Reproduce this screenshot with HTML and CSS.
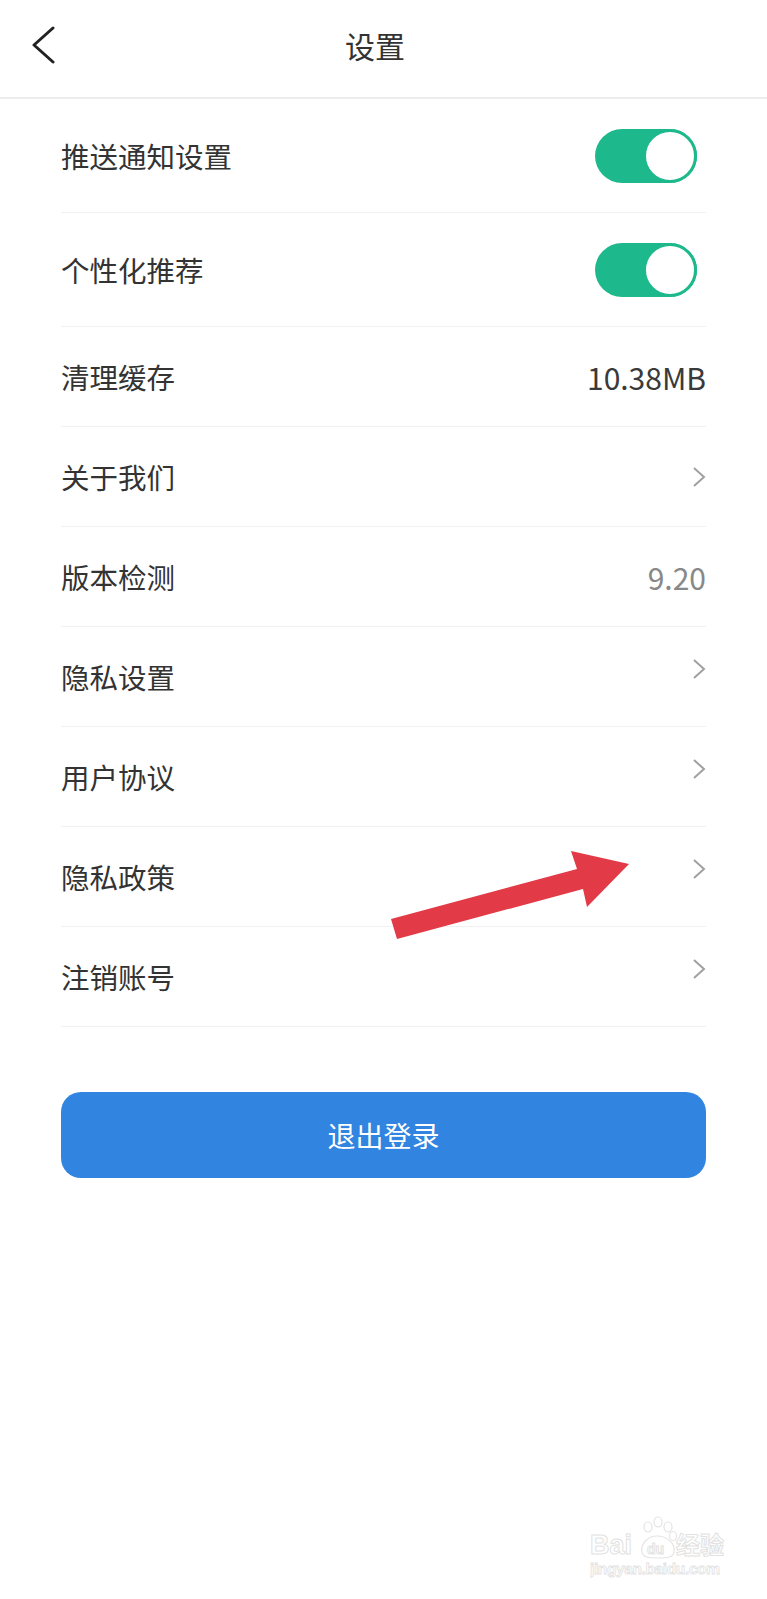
FILE: index.html
```html
<!DOCTYPE html>
<html lang="zh-CN">
<head>
    <meta charset="UTF-8">
    <title>设置</title>
    <link rel="stylesheet" href="styles.css">
</head>
<body>
<div class="page">
    <header class="nav">
        <a class="nav-back" href="javascript:;">
            <svg width="24" height="38" viewBox="0 0 24 38">
                <path d="M22 2 L3 19 L22 36" fill="none" stroke="#222" stroke-width="3" stroke-linecap="round" stroke-linejoin="round"/>
            </svg>
        </a>
        <h1 class="nav-title">设置</h1>
    </header>

    <ul class="setlist">
        <li class="setitem tall">
            <span class="setlabel">推送通知设置</span>
            <span class="switch on"></span>
        </li>
        <li class="setitem tall">
            <span class="setlabel">个性化推荐</span>
            <span class="switch on"></span>
        </li>
        <li class="setitem">
            <span class="setlabel">清理缓存</span>
            <span class="setvalue">10.38MB</span>
        </li>
        <li class="setitem">
            <span class="setlabel">关于我们</span>
            <svg class="arrow" width="14" height="22" viewBox="0 0 14 22"><path d="M2 2 L12 11 L2 20" fill="none" stroke="#a0a0a0" stroke-width="2"/></svg>
        </li>
        <li class="setitem">
            <span class="setlabel">版本检测</span>
            <span class="setvalue light">9.20</span>
        </li>
        <li class="setitem">
            <span class="setlabel">隐私设置</span>
            <svg class="arrow up" width="14" height="22" viewBox="0 0 14 22"><path d="M2 2 L12 11 L2 20" fill="none" stroke="#a0a0a0" stroke-width="2"/></svg>
        </li>
        <li class="setitem">
            <span class="setlabel">用户协议</span>
            <svg class="arrow up" width="14" height="22" viewBox="0 0 14 22"><path d="M2 2 L12 11 L2 20" fill="none" stroke="#a0a0a0" stroke-width="2"/></svg>
        </li>
        <li class="setitem">
            <span class="setlabel">隐私政策</span>
            <svg class="arrow up" width="14" height="22" viewBox="0 0 14 22"><path d="M2 2 L12 11 L2 20" fill="none" stroke="#a0a0a0" stroke-width="2"/></svg>
        </li>
        <li class="setitem">
            <span class="setlabel">注销账号</span>
            <svg class="arrow up" width="14" height="22" viewBox="0 0 14 22"><path d="M2 2 L12 11 L2 20" fill="none" stroke="#a0a0a0" stroke-width="2"/></svg>
        </li>
    </ul>

    <div class="logout-wrap">
        <a class="logout" href="javascript:;">退出登录</a>
    </div>

    <!-- red pointer drawn over the list -->
    <svg class="pointer" width="767" height="1599" viewBox="0 0 767 1599">
        <polygon points="391,919 577,869 571,851 629,864 587,907 583,889 397,939" fill="#e23a46"/>
    </svg>

    <svg class="watermark" width="140" height="66" viewBox="0 0 140 66">
        <g fill="#fff" stroke="#e4e4e4" stroke-width="1.2">
            <ellipse cx="58" cy="11" rx="4" ry="5"/>
            <ellipse cx="68" cy="6" rx="4" ry="5"/>
            <ellipse cx="78" cy="11" rx="4" ry="5"/>
            <ellipse cx="83" cy="20" rx="3.5" ry="4.5"/>
            <path d="M52 36 C50 26 60 20 67 20 C76 20 86 27 84 36 C83 42 76 42 68 42 C60 42 53 42 52 36 Z"/>
        </g>
        <g font-family="'Liberation Sans', 'Noto Sans CJK SC', sans-serif" fill="#fff" stroke="#e2e2e2" stroke-width="1">
            <text x="0" y="38" font-size="27" font-weight="bold">Bai</text>
            <text x="57" y="38" font-size="14" font-weight="bold">du</text>
            <text x="86" y="38" font-size="24" font-family="'Noto Sans CJK SC', sans-serif" font-weight="bold">经验</text>
        </g>
        <text x="0" y="58" font-size="15.5" font-family="'Liberation Sans', sans-serif" font-weight="bold" fill="#fff" stroke="#e2e2e2" stroke-width="0.8" textLength="130">jingyan.baidu.com</text>
    </svg>
</div>
</body>
</html>
```

FILE: styles.css
```css
body{
    margin:0;
    background:#fff;
    font-family:"Noto Sans CJK SC", "Noto Sans", sans-serif;
    color:#333;
}
.page{
    width:767px;
    min-height:1599px;
    position:relative;
    overflow:hidden;
}

.nav{
    height:99px;
    display:flex;
    align-items:center;
    padding:0 72px 8px 31px;
    box-sizing:border-box;
    border-bottom:2px solid #ececec;
}
.nav-back{
    width:24px;
    height:38px;
    display:block;
}
.nav-back svg{
    display:block;
}
.nav-title{
    flex:1;
    margin:0;
    text-align:center;
    font-size:30px;
    font-weight:normal;
    color:#333;
    line-height:40px;
}

.setlist{
    list-style:none;
    margin:0 61px;
    padding:0;
}
.setitem{
    height:100px;
    box-sizing:border-box;
    display:flex;
    align-items:center;
    justify-content:space-between;
    border-bottom:1px solid #f1f1f1;
}
.setitem.tall{
    height:114px;
}
.setlabel{
    font-size:28.5px;
    line-height:40px;
    color:#333;
}
.setvalue{
    font-size:30px;
    line-height:40px;
    color:#3a3a3a;
}
.setvalue.light{
    color:#888;
}
.arrow{
    display:block;
}
.arrow.up{
    margin-bottom:16px;
}

.switch{
    width:102px;
    height:54px;
    margin-right:9px;
    border-radius:27px;
    background:#d8d8d8;
    position:relative;
}
.switch.on{
    background:#1db98c;
}
.switch::after{
    content:"";
    position:absolute;
    top:0;
    right:0;
    width:54px;
    height:54px;
    box-sizing:border-box;
    border-radius:50%;
    border:3px solid #1db98c;
    background:#fff;
}

.logout-wrap{
    padding:65px 61px 0;
}
.logout{
    display:block;
    height:86px;
    line-height:86px;
    border-radius:20px;
    background:#3184e0;
    color:#fff;
    text-align:center;
    font-size:28px;
    text-decoration:none;
}

.pointer{
    position:absolute;
    left:0;
    top:0;
    pointer-events:none;
}
.watermark{
    position:absolute;
    left:590px;
    top:1516px;
}
```
